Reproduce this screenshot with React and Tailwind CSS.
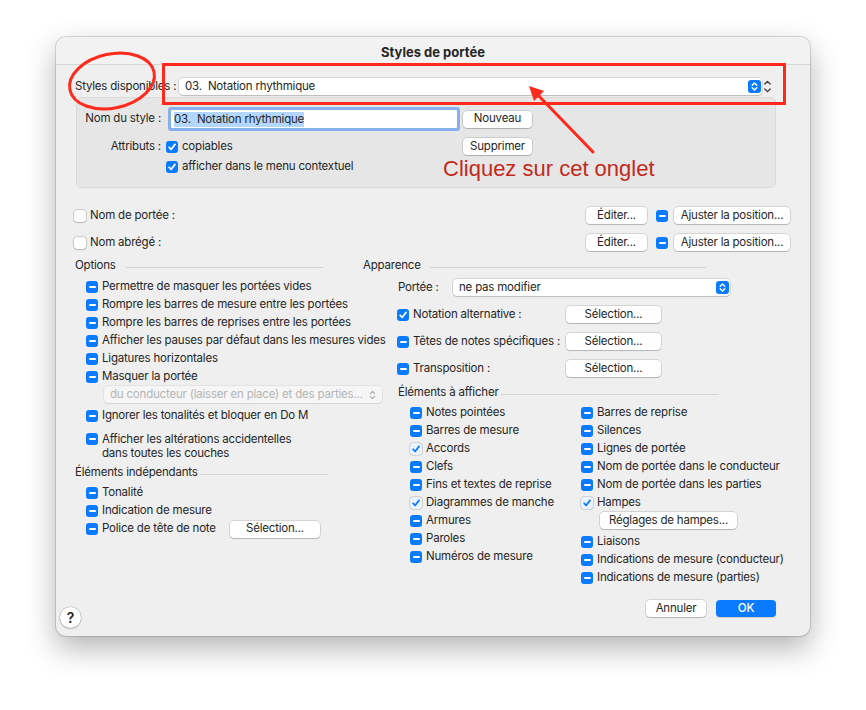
import React from "react";

const FONT = { fontFamily: "Inter, 'Liberation Sans', sans-serif" };
const T = "text-[11.5px] tracking-[-0.2px]";

function Cb({ t = "minus" }) {
  if (t === "empty")
    return <span className="inline-block w-[12px] h-[12px] rounded-[3px] bg-white shadow-[0_0_0_0.5px_rgba(0,0,0,0.3),0_1px_1px_rgba(0,0,0,0.12)] shrink-0" />;
  if (t === "light")
    return (
      <span className="inline-flex w-[12px] h-[12px] rounded-[3px] bg-[#eaf3ff] shadow-[0_0_0_0.5px_rgba(0,0,0,0.25)] shrink-0 items-center justify-center">
        <svg width="10" height="10" viewBox="0 0 11 11"><path d="M2.3 5.8 L4.5 8.2 L8.8 2.6" stroke="#0a7aff" strokeWidth="1.9" fill="none" strokeLinecap="round" strokeLinejoin="round" /></svg>
      </span>
    );
  if (t === "check")
    return (
      <span className="inline-flex w-[12px] h-[12px] rounded-[3px] bg-[#0a7aff] shrink-0 items-center justify-center">
        <svg width="10" height="10" viewBox="0 0 11 11"><path d="M2.3 5.8 L4.5 8.2 L8.8 2.6" stroke="white" strokeWidth="1.9" fill="none" strokeLinecap="round" strokeLinejoin="round" /></svg>
      </span>
    );
  return (
    <span className="inline-flex w-[12px] h-[12px] rounded-[3px] bg-[#0a7aff] shrink-0 items-center justify-center">
      <span className="block w-[7px] h-[2px] bg-white rounded-[1px]" />
    </span>
  );
}

function Btn({ children, w, className = "" }) {
  return (
    <div
      className={"h-[17px] rounded-[4px] bg-white shadow-[0_0_0_0.5px_rgba(0,0,0,0.22),0_1px_1px_rgba(0,0,0,0.15)] flex items-center justify-center text-[#262626] shrink-0 " + T + " " + className}
      style={{ width: w }}
    >
      {children}
    </div>
  );
}

function BlueStepper() {
  return (
    <span className="inline-flex w-[13px] h-[13px] rounded-[3px] bg-[#0a7aff] items-center justify-center shrink-0">
      <svg width="9" height="11" viewBox="0 0 9 11"><path d="M2.2 4.2 L4.5 2 L6.8 4.2 M2.2 6.8 L4.5 9 L6.8 6.8" stroke="white" strokeWidth="1.4" fill="none" strokeLinecap="round" strokeLinejoin="round" /></svg>
    </span>
  );
}

function Item({ t = "minus", children, className = "" }) {
  return (
    <div className={"h-[18px] flex items-center gap-[4px] text-[#262626] " + T + " " + className}>
      <Cb t={t} />
      <span className="whitespace-nowrap">{children}</span>
    </div>
  );
}

function Header({ children, lineMl, lineW }) {
  return (
    <div className={"h-[14px] flex items-center text-[#262626] " + T}>
      <span className="whitespace-nowrap">{children}</span>
      <span className="h-px bg-[#d4d4d4] mt-[3px] shrink-0" style={{ marginLeft: lineMl, width: lineW }} />
    </div>
  );
}

export default function App() {
  return (
    <div className="relative w-[866px] h-[710px] bg-white pl-[56px] pt-[37px] overflow-hidden" style={FONT}>
      <div className="w-[754px] h-[599px] rounded-[10px] bg-[#efefef] shadow-[0_0_0_1px_rgba(0,0,0,0.14),0_12px_30px_rgba(0,0,0,0.3)] flex flex-col overflow-hidden">
        {/* title bar */}
        <div className="h-[28px] border-b border-[#d6d6d6] flex items-center justify-center text-[13px] font-bold text-[#262626] bg-[#f2f2f2] pt-[4px]">
          Styles de portée
        </div>

        <div className="pl-[19px] pr-[20px] flex flex-col">
          {/* Styles disponibles */}
          <div className={"mt-[13px] h-[17px] flex items-center text-[#262626] " + T}>
            <span className="w-[104px] whitespace-nowrap">Styles disponibles :</span>
            <div className="w-[583px] h-[17px] bg-white rounded-[4px] shadow-[0_0_0_0.5px_rgba(0,0,0,0.2),0_1px_1px_rgba(0,0,0,0.12)] flex items-center justify-between pl-[6px] pr-[1px]">
              <span className="whitespace-pre">03.  Notation rhythmique</span>
              <BlueStepper />
            </div>
            <div className="w-[11px] h-[17px] flex items-center justify-center">
              <svg width="9" height="15" viewBox="0 0 9 15"><path d="M1.8 5 L4.5 2.3 L7.2 5 M1.8 10 L4.5 12.7 L7.2 10" stroke="#333" strokeWidth="1.2" fill="none" strokeLinecap="round" strokeLinejoin="round" /></svg>
            </div>
          </div>

          {/* Group box */}
          <div className={"ml-[1px] mt-[2px] w-[700px] h-[91px] rounded-[5px] bg-[#e6e6e6] border border-[#dadada] flex flex-col text-[#262626] " + T}>
            <div className="mt-[12px] h-[18px] flex items-center">
              <span className="w-[84px] text-right whitespace-nowrap">Nom du style :</span>
              <div className="ml-[10px] w-[286px] h-[18px] bg-white shadow-[0_0_0_3px_#86b1ee] rounded-[1px] flex items-center pl-[3px]">
                <span className="bg-[#b3d7ff] whitespace-pre leading-[15px]">03.  Notation rhythmique</span>
              </div>
              <Btn w={69} className="ml-[6px]">Nouveau</Btn>
            </div>
            <div className="mt-[10px] h-[17px] flex items-center">
              <span className="w-[84px] text-right whitespace-nowrap">Attributs :</span>
              <div className="ml-[5px] w-[297px] flex items-center gap-[4px]">
                <Cb t="check" />
                <span>copiables</span>
              </div>
              <Btn w={69}>Supprimer</Btn>
            </div>
            <div className="mt-[4px] h-[15px] flex items-center pl-[89px] gap-[4px]">
              <Cb t="check" />
              <span>afficher dans le menu contextuel</span>
            </div>
          </div>

          {/* Nom de portée */}
          <div className={"mt-[19px] h-[17px] flex items-center text-[#262626] " + T}>
            <div className="flex items-center gap-[4px] -ml-[1px] flex-1">
              <Cb t="empty" />
              <span>Nom de portée :</span>
            </div>
            <Btn w={61}>Éditer...</Btn>
            <span className="ml-[9px] flex"><Cb /></span>
            <Btn w={116} className="ml-[6px]">Ajuster la position...</Btn>
          </div>
          <div className={"mt-[10px] h-[17px] flex items-center text-[#262626] " + T}>
            <div className="flex items-center gap-[4px] -ml-[1px] flex-1">
              <Cb t="empty" />
              <span>Nom abrégé :</span>
            </div>
            <Btn w={61}>Éditer...</Btn>
            <span className="ml-[9px] flex"><Cb /></span>
            <Btn w={116} className="ml-[6px]">Ajuster la position...</Btn>
          </div>

          {/* two columns */}
          <div className="mt-[8px] flex">
            {/* left */}
            <div className="w-[288px] flex flex-col">
              <Header lineMl={10} lineW={197}>Options</Header>
              <div className="mt-[5px] pl-[11px] flex flex-col">
                <Item>Permettre de masquer les portées vides</Item>
                <Item>Rompre les barres de mesure entre les portées</Item>
                <Item>Rompre les barres de reprises entre les portées</Item>
                <Item>Afficher les pauses par défaut dans les mesures vides</Item>
                <Item>Ligatures horizontales</Item>
                <Item>Masquer la portée</Item>
                <div className={"mt-[0px] ml-[18px] w-[278px] h-[17px] rounded-[4px] bg-[#f6f6f6] shadow-[0_0_0_0.5px_rgba(0,0,0,0.1),0_1px_1px_rgba(0,0,0,0.06)] flex items-center justify-between pl-[6px] pr-[6px] text-[#b4b4b4] " + T}>
                  <span className="whitespace-nowrap">du conducteur (laisser en place) et des parties...</span>
                  <svg width="7" height="10" viewBox="0 0 7 10"><path d="M1.2 3.6 L3.5 1.5 L5.8 3.6 M1.2 6.4 L3.5 8.5 L5.8 6.4" stroke="#aaa" strokeWidth="1.1" fill="none" strokeLinecap="round" strokeLinejoin="round" /></svg>
                </div>
                <Item className="mt-[4px]">Ignorer les tonalités et bloquer en Do M</Item>
                <div className={"mt-[7px] flex items-start gap-[4px] text-[#262626] leading-[14px] " + T}>
                  <span className="mt-[1px] flex"><Cb /></span>
                  <span>Afficher les altérations accidentelles<br />dans toutes les couches</span>
                </div>
              </div>
              <div className="mt-[6px]">
                <Header lineMl={2} lineW={128}>Éléments indépendants</Header>
              </div>
              <div className="mt-[4px] pl-[11px] flex flex-col">
                <Item>Tonalité</Item>
                <Item>Indication de mesure</Item>
                <div className="h-[18px] flex items-center">
                  <div className="w-[144px]">
                    <Item>Police de tête de note</Item>
                  </div>
                  <Btn w={90}>Sélection...</Btn>
                </div>
              </div>
            </div>

            {/* right */}
            <div className={"flex-1 flex flex-col text-[#262626] " + T}>
              <Header lineMl={9} lineW={276}>Apparence</Header>
              <div className="mt-[6px] h-[17px] flex items-center pl-[35px]">
                <span className="w-[55px] whitespace-nowrap">Portée :</span>
                <div className="w-[277px] h-[17px] bg-white rounded-[4px] shadow-[0_0_0_0.5px_rgba(0,0,0,0.2),0_1px_1px_rgba(0,0,0,0.12)] flex items-center justify-between pl-[6px] pr-[1px]">
                  <span>ne pas modifier</span>
                  <BlueStepper />
                </div>
              </div>
              {[
                ["check", "Notation alternative :"],
                ["minus", "Têtes de notes spécifiques :"],
                ["minus", "Transposition :"],
              ].map(([t, l]) => (
                <div key={l} className="mt-[10px] h-[17px] flex items-center pl-[34px]">
                  <div className="w-[169px] flex items-center gap-[4px]">
                    <Cb t={t} />
                    <span className="whitespace-nowrap">{l}</span>
                  </div>
                  <Btn w={95}>Sélection...</Btn>
                </div>
              ))}
              <div className="mt-[9px] pl-[35px]">
                <Header lineMl={2} lineW={218}>Éléments à afficher</Header>
              </div>
              <div className="mt-[4px] pl-[47px] flex">
                <div className="w-[171px] flex flex-col">
                  <Item>Notes pointées</Item>
                  <Item>Barres de mesure</Item>
                  <Item t="light">Accords</Item>
                  <Item>Clefs</Item>
                  <Item>Fins et textes de reprise</Item>
                  <Item t="light">Diagrammes de manche</Item>
                  <Item>Armures</Item>
                  <Item>Paroles</Item>
                  <Item>Numéros de mesure</Item>
                </div>
                <div className="flex flex-col">
                  <Item>Barres de reprise</Item>
                  <Item>Silences</Item>
                  <Item>Lignes de portée</Item>
                  <Item>Nom de portée dans le conducteur</Item>
                  <Item>Nom de portée dans les parties</Item>
                  <Item t="light">Hampes</Item>
                  <Btn w={137} className="mt-[0px] ml-[19px]">Réglages de hampes...</Btn>
                  <Item className="mt-[4px]">Liaisons</Item>
                  <Item>Indications de mesure (conducteur)</Item>
                  <Item>Indications de mesure (parties)</Item>
                </div>
              </div>
            </div>
          </div>
        </div>

        {/* footer */}
        <div className="mt-auto flex items-end justify-between pl-[4px] pr-[34px] pb-[8px]">
          <div className="w-[21px] h-[21px] rounded-full bg-white shadow-[0_0_0_0.5px_rgba(0,0,0,0.2),0_1px_2px_rgba(0,0,0,0.2)] flex items-center justify-center text-[14px] font-semibold text-[#262626]">?</div>
          <div className="flex items-center gap-[10px] mb-[11px]">
            <Btn w={60}>Annuler</Btn>
            <div className={"w-[60px] h-[17px] rounded-[4px] bg-[#0a7aff] shadow-[0_1px_1px_rgba(0,0,0,0.15)] flex items-center justify-center text-white font-medium " + T}>OK</div>
          </div>
        </div>
      </div>

      {/* annotations */}
      <div className="absolute left-[162px] top-[63px] w-[624px] h-[42px] border-[3px] border-[#ff2a1c]" />
      <svg className="absolute left-0 top-0 pointer-events-none" width="866" height="710">
        <ellipse cx="112" cy="81" rx="43" ry="27" transform="rotate(-12 112 81)" fill="none" stroke="#ff2a1c" strokeWidth="3" />
        <line x1="593" y1="152" x2="536" y2="93" stroke="#ff2a1c" strokeWidth="3" strokeLinecap="round" />
        <polygon points="529,86 544,91 534,101" fill="#ff2a1c" />
      </svg>
      <div className="absolute left-[443px] top-[155px] text-[22px] leading-[28px] text-[#c3291c] whitespace-nowrap" style={{ fontFamily: "'Liberation Sans', Arial, sans-serif" }}>
        Cliquez sur cet onglet
      </div>
    </div>
  );
}
